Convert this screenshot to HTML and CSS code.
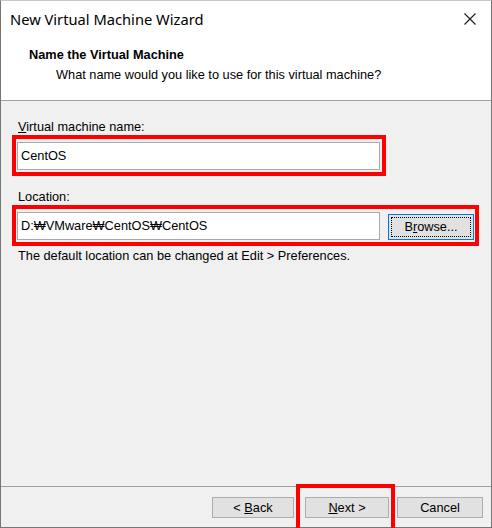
FILE: index.html
```html
<!DOCTYPE html>
<html>
<head>
<meta charset="utf-8">
<link rel="stylesheet" href="styles.css">
</head>
<body>
<div class="window">
  <div class="titlebar">
    <span class="title">New Virtual Machine Wizard</span>
    <svg class="close" width="12" height="12" viewBox="0 0 12 12"><path d="M0.5 0.5 L11.5 11.5 M11.5 0.5 L0.5 11.5" stroke="#1a1a1a" stroke-width="1.1" fill="none"/></svg>
  </div>
  <div class="header">
    <div class="h-title">Name the Virtual Machine</div>
    <div class="h-sub">What name would you like to use for this virtual machine?</div>
  </div>
  <div class="content">
    <div class="label"><u>V</u>irtual machine name:</div>
    <div class="mark mark-name">
      <div class="input">CentOS</div>
    </div>
    <div class="label label-loc">Location:</div>
    <div class="mark mark-loc">
      <div class="input">D:₩VMware₩CentOS₩CentOS</div>
      <div class="btn btn-browse"><span class="focus">B<u>r</u>owse...</span></div>
    </div>
    <div class="note">The default location can be changed at Edit &gt; Preferences.</div>
  </div>
  <div class="footer">
    <div class="btn fbtn back"><span>&lt; <u>B</u>ack</span></div>
    <div class="btn fbtn next"><span><u>N</u>ext &gt;</span></div>
    <div class="btn fbtn cancel"><span>Cancel</span></div>
    <div class="mark-next"></div>
  </div>
</div>
</body>
</html>
```
FILE: styles.css
```css
html, body {
  margin: 0;
  padding: 0;
  background: #ffffff;
}
body {
  font-family: "Liberation Sans", Arial, sans-serif;
  font-size: 12.75px;
  color: #000;
}
.window {
  width: 492px;
  height: 528px;
  box-sizing: border-box;
  border: 1px solid #767676;
  border-top-color: #c8c8c8;
  display: flex;
  flex-direction: column;
  background: #fff;
}
.titlebar {
  height: 36px;
  display: flex;
  align-items: center;
  justify-content: space-between;
  padding: 0 15px 0 9px;
  flex: none;
}
.title {
  font-family: "Noto Sans", "Liberation Sans", sans-serif;
  font-size: 14.7px;
  color: #000;
  margin-top: -1px;
}
.close {
  margin-top: -1px;
}
.header {
  height: 64px;
  flex: none;
  padding: 10px 0 0 28px;
  box-sizing: border-box;
  border-bottom: 1px solid #a0a0a0;
}
.h-title {
  font-weight: bold;
  font-size: 12.75px;
  line-height: 16px;
}
.h-sub {
  margin-top: 4px;
  padding-left: 27px;
  font-size: 12.75px;
  line-height: 16px;
}
.content {
  flex: 1;
  background: #f0f0f0;
  padding: 18px 0 0 11px;
  box-sizing: border-box;
}
.label {
  padding-left: 6px;
  line-height: 16px;
  height: 16px;
}
.label-loc {
  margin-top: 13px;
}
.mark {
  border: 4px solid #ff0000;
  display: flex;
  align-items: center;
}
.mark-name {
  width: 374px;
  box-sizing: border-box;
  height: 41px;
  padding: 1px 1px 0 1px;
}
.mark-loc {
  width: 467px;
  box-sizing: border-box;
  height: 41px;
  padding: 1px 1px 0 1px;
  gap: 8px;
}
.input {
  width: 363px;
  height: 28px;
  box-sizing: border-box;
  border: 1px solid #a9a9a9;
  background: #fff;
  line-height: 26px;
  padding-left: 3px;
  white-space: nowrap;
}
.btn {
  background: #e1e1e1;
  border: 1px solid #adadad;
  box-sizing: border-box;
  display: flex;
  align-items: center;
  justify-content: center;
  white-space: pre;
}
.btn-browse {
  width: 86px;
  height: 26px;
  border-color: #0078d7;
  margin-top: 2px;
}
.focus {
  outline: 1px dotted #000;
  outline-offset: 0;
  width: 78px;
  height: 18px;
  line-height: 18px;
  text-align: center;
}
.note {
  padding-left: 6px;
  margin-top: 2px;
  line-height: 16px;
}
.footer {
  height: 41px;
  flex: none;
  background: #f0f0f0;
  border-top: 1px solid #a0a0a0;
  display: flex;
  align-items: flex-start;
  justify-content: flex-end;
  padding: 10px 8px 0 0;
  box-sizing: border-box;
  position: relative;
}
.fbtn {
  height: 21px;
}
.back {
  width: 82px;
}
.next {
  width: 84px;
  margin-left: 11px;
}
.cancel {
  width: 86px;
  margin-left: 8px;
}
.mark-next {
  position: absolute;
  left: 295px;
  top: -3px;
  width: 99px;
  height: 48px;
  box-sizing: border-box;
  border: 4px solid #ff0000;
}
```
